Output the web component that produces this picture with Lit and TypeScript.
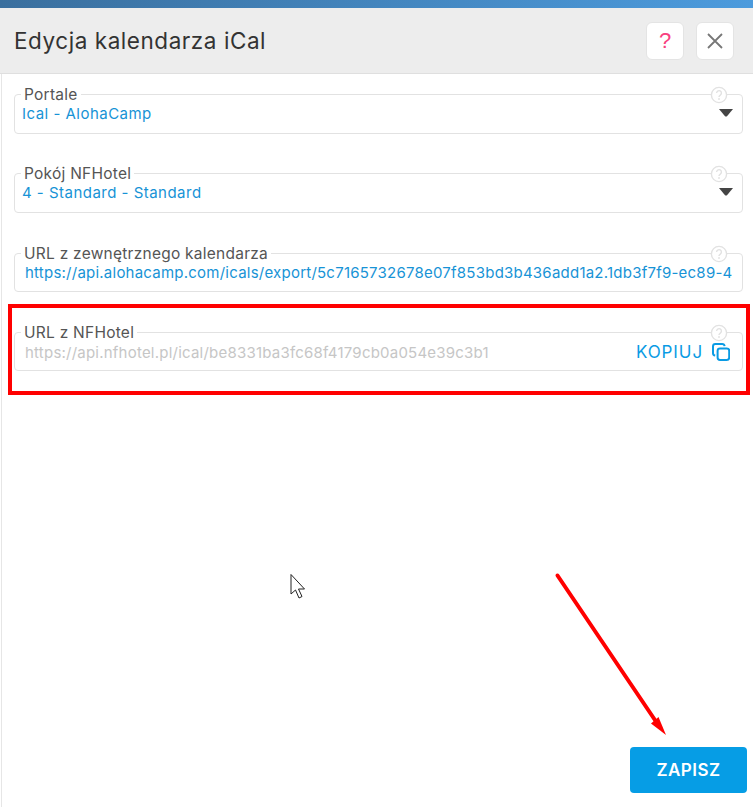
import { LitElement, html, css } from "lit";
import { customElement } from "lit/decorators.js";

const helpIcon = html`<svg class="help" width="18" height="18" viewBox="0 0 18 18" aria-hidden="true">
  <circle cx="9" cy="9" r="7.6" fill="#fff" stroke="#e2e2e2" stroke-width="1.4"/>
  <path d="M6.6 7.1a2.4 2.4 0 1 1 3.7 2c-.9.6-1.3 1-1.3 2" fill="none" stroke="#e2e2e2" stroke-width="1.4"/>
  <circle cx="9" cy="13" r=".9" fill="#e2e2e2"/>
</svg>`;

const caret = html`<svg class="caret" width="14" height="8" viewBox="0 0 14 8" aria-hidden="true"><path d="M0 0H14L8 7.2Q7 8 6 7.2Z" fill="#444"/></svg>`;

const copyIcon = html`<svg width="18" height="18" viewBox="0 0 18 18" fill="none" stroke="#0a9be4" stroke-width="2" aria-hidden="true">
  <path d="M3.2 12.6C1.8 12.4 1 11.6 1 10.2V3.4C1 2 2 1 3.4 1H10.2C11.6 1 12.4 1.8 12.6 3.2"/>
  <rect x="5.6" y="5.4" width="11.6" height="11.6" rx="2.4"/>
</svg>`;

@customElement("app-root")
export class AppRoot extends LitElement {
  static styles = css`
    :host {
      display: block;
      position: relative;
      width: 753px;
      height: 807px;
      overflow: hidden;
      background: #fff;
      font-family: Inter, "Noto Sans", sans-serif;
    }
    .page { display: flex; flex-direction: column; height: 807px; }
    .topbar { height: 8px; flex: none; background: linear-gradient(90deg, #3a6f9e, #4c9bdd); }
    .header {
      flex: none;
      height: 66px;
      box-sizing: border-box;
      display: flex;
      align-items: center;
      padding: 0 19px 0 14px;
      background: #ededed;
      border-bottom: 1px solid #dfdfdf;
    }
    h1 {
      flex: 1;
      margin: 0;
      font-size: 22.5px;
      font-weight: 400;
      color: #333;
      letter-spacing: 0.55px;
    }
    .hbtn {
      width: 38px;
      height: 38px;
      margin-left: 12px;
      box-sizing: border-box;
      display: flex;
      align-items: center;
      justify-content: center;
      background: #fff;
      border: 1px solid #e4e4e4;
      border-radius: 6px;
      padding: 0;
    }
    .q { font-size: 22px; color: #f8417f; line-height: 1; }
    .body {
      flex: 1;
      display: flex;
      flex-direction: column;
      margin-left: 1px;
      border-left: 1px solid #e6e6e6;
      padding: 20px 10px 14px 12px;
    }
    .fields { display: flex; flex-direction: column; gap: 39.83px; }
    .field {
      position: relative;
      height: 39.5px;
      box-sizing: border-box;
      border: 1px solid #e2e2e2;
      border-radius: 4px;
      display: flex;
      align-items: center;
      padding: 0 12px 0 7px;
      font-size: 15px;
      color: #1793d6;
    }
    .field.url { padding: 0 8px 0 10px; }
    .field.url .value { margin-top: 2px; }
    .label {
      position: absolute;
      left: 6px;
      top: -9px;
      padding: 0 3px;
      background: #fff;
      font-size: 15.5px;
      line-height: 17px;
      color: #555;
      letter-spacing: 0.25px;
    }
    .help { position: absolute; right: 14px; top: -9px; }
    .value { flex: 1; white-space: nowrap; line-height: 18px; }
    .caret { position: absolute; right: 9px; top: 14px; }
    .pick { letter-spacing: 0.48px; }
    .link { letter-spacing: 0.23px; }
    .muted { color: #c6c6c6; letter-spacing: 0.22px; }
    .copy {
      display: flex;
      align-items: center;
      gap: 9px;
      margin-right: 4px;
      color: #0a9be4;
      font-size: 17px;
      letter-spacing: 0.9px;
    }
    .footer { margin-top: auto; display: flex; justify-content: flex-end; margin-right: -4px; }
    .save {
      width: 117px;
      height: 46px;
      border: 0;
      border-radius: 4px;
      background: #069de5;
      color: #fff;
      font: 600 17px Inter, "Noto Sans", sans-serif;
      letter-spacing: 0.45px;
    }
    .marker {
      position: absolute;
      left: 8px;
      top: 304px;
      width: 742px;
      height: 91px;
      box-sizing: border-box;
      border: 4px solid #ff0000;
      pointer-events: none;
    }
    .overlay { position: absolute; left: 0; top: 0; pointer-events: none; }
  `;

  render() {
    return html`
      <div class="page">
        <div class="topbar"></div>
        <div class="header">
          <h1>Edycja kalendarza iCal</h1>
          <button class="hbtn" aria-label="Pomoc"><span class="q">?</span></button>
          <button class="hbtn" aria-label="Zamknij">
            <svg width="16" height="16" viewBox="0 0 16 16" aria-hidden="true"><path d="M1 1L15 15M15 1L1 15" stroke="#777" stroke-width="1.8" fill="none"/></svg>
          </button>
        </div>
        <div class="body">
          <div class="fields">
            <div class="field">
              <span class="label">Portale</span>${helpIcon}
              <span class="value pick">Ical - AlohaCamp</span>${caret}
            </div>
            <div class="field">
              <span class="label">Pokój NFHotel</span>${helpIcon}
              <span class="value pick">4 - Standard - Standard</span>${caret}
            </div>
            <div class="field url">
              <span class="label">URL z zewnętrznego kalendarza</span>${helpIcon}
              <span class="value link">https://api.alohacamp.com/icals/export/5c7165732678e07f853bd3b436add1a2.1db3f7f9-ec89-4</span>
            </div>
            <div class="field url">
              <span class="label">URL z NFHotel</span>${helpIcon}
              <span class="value muted">https://api.nfhotel.pl/ical/be8331ba3fc68f4179cb0a054e39c3b1</span>
              <span class="copy">KOPIUJ ${copyIcon}</span>
            </div>
          </div>
          <div class="footer"><button class="save">ZAPISZ</button></div>
        </div>
      </div>
      <div class="marker"></div>
      <svg class="overlay" width="753" height="807" aria-hidden="true">
        <path d="M557.5 575.5L659 726" stroke="#ff0000" stroke-width="4" stroke-linecap="round" fill="none"/>
        <path d="M666 735L651 723.5L658.5 717Z" fill="#ff0000"/>
        <path d="M291 574.5V594L295.5 590L299 598L302 596.5L298.5 589H304.5Z" fill="#fff" stroke="#222" stroke-width="1"/>
      </svg>
    `;
  }
}
